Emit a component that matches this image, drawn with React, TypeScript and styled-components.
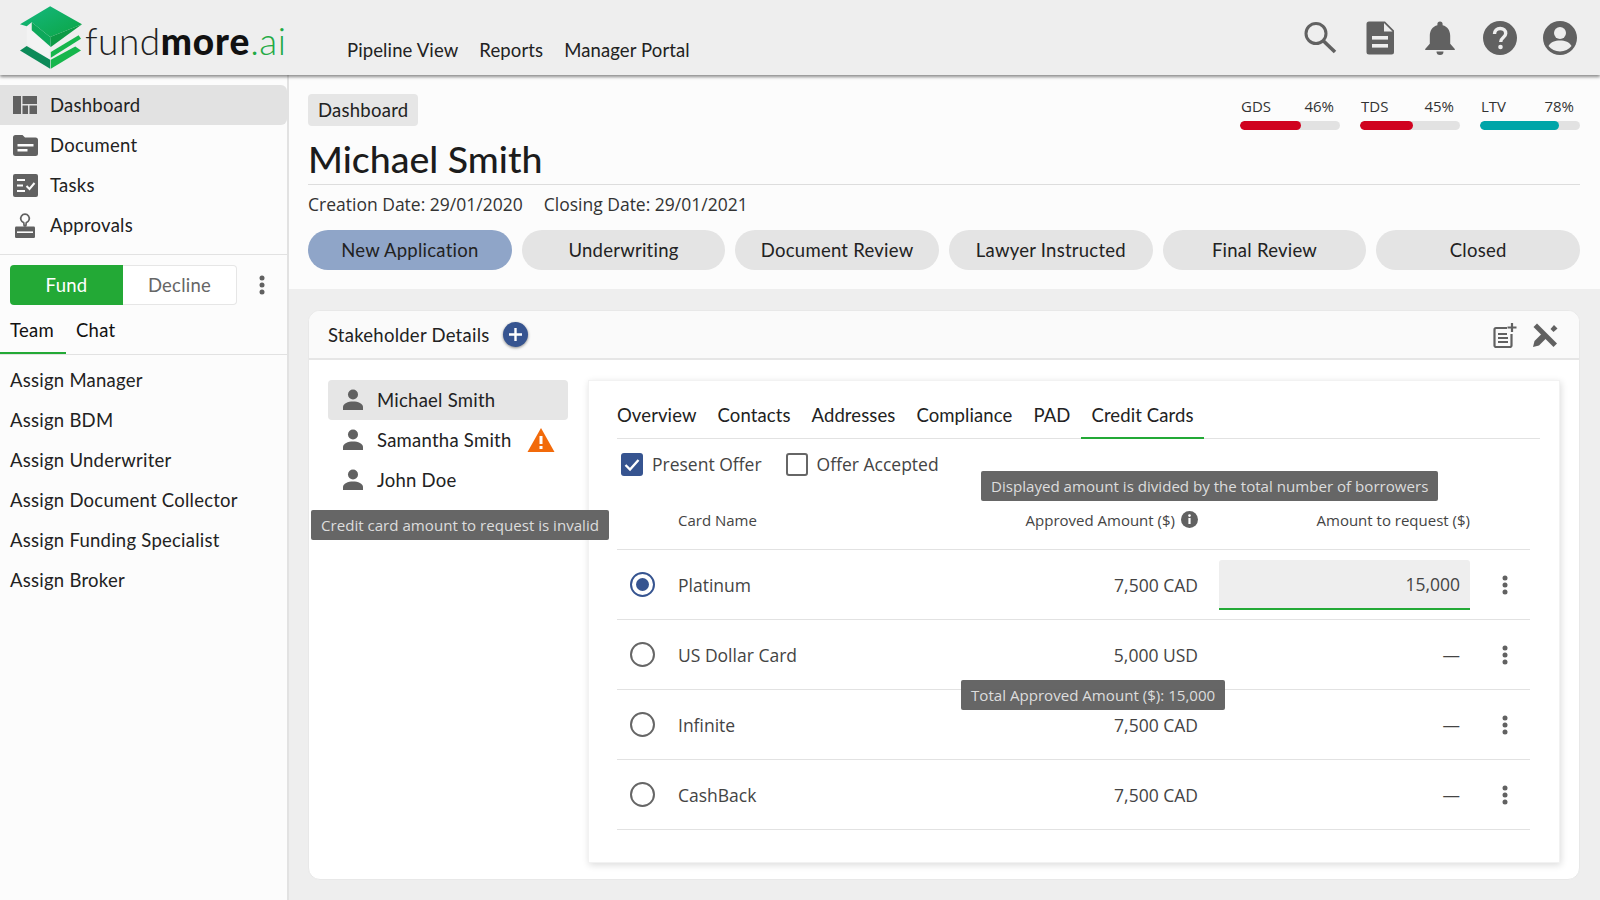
import React from "react";
import styled, { createGlobalStyle } from "styled-components";

const Global = createGlobalStyle`
  html, body { margin: 0; padding: 0; background: #eeeeee; }
  body { font-family: "Open Sans", "Liberation Sans", sans-serif; color: #222; }
  * { box-sizing: border-box; }
`;

const HEAD = `"Lato", "Open Sans", sans-serif`;
const HEADTEXT = `
  font-family: ${HEAD};
  font-size: 18.5px;
  letter-spacing: 0.25px;
  color: #222;
`;

const Page = styled.div`
  position: relative;
  width: 1600px;
  height: 900px;
  overflow: hidden;
  display: flex;
  flex-direction: column;
  background: #eee;
`;
const Header = styled.header`
  height: 75px;
  flex: none;
  background: #eeeeee;
  box-shadow: 0 2px 3px rgba(0, 0, 0, 0.45);
  display: flex;
  align-items: flex-start;
  position: relative;
  z-index: 2;
`;
const Logo = styled.div`
  width: 347px;
  flex: none;
  padding: 6px 0 0 20px;
  display: flex;
  align-items: flex-start;
`;
const LogoText = styled.div`
  font-family: ${HEAD};
  font-size: 37px;
  font-weight: 300;
  color: #222;
  margin: 13px 0 0 3px;
  line-height: 44px;
  letter-spacing: 0.5px;
  white-space: nowrap;
  b { font-weight: 900; color: #111; letter-spacing: 0.9px; }
  i { font-style: normal; color: #22aa44; }
`;
const TopNav = styled.nav`
  ${HEADTEXT}
  letter-spacing: 0.12px;
  display: flex;
  gap: 21px;
  padding-top: 39px;
  line-height: 22px;
`;
const TopIcons = styled.div`
  margin-left: auto;
  display: flex;
  gap: 24px;
  padding: 20px 22px 0 0;
`;
const Body = styled.div`
  flex: 1;
  display: flex;
  min-height: 0;
`;
const Side = styled.aside`
  width: 289px;
  flex: none;
  background: #fcfcfc;
  border-right: 2px solid #e2e2e2;
  padding-top: 10px;
`;
const NavRow = styled.div<{ $active?: boolean }>`
  ${HEADTEXT}
  height: 40px;
  display: flex;
  align-items: center;
  gap: 12px;
  padding-left: 12px;
  border-radius: 0 6px 6px 0;
  background: ${(p) => (p.$active ? "#e2e2e2" : "transparent")};
`;
const NavIcon = styled.span`
  width: 26px;
  height: 25px;
  flex: none;
  display: flex;
  align-items: center;
  justify-content: center;
`;
const SideDivider = styled.div`
  height: 1px;
  background: #e2e2e2;
  margin-top: 9px;
`;
const ActionRow = styled.div`
  display: flex;
  align-items: center;
  padding: 10px 0 0 10px;
`;
const FundBtn = styled.div`
  ${HEADTEXT}
  color: #fff;
  width: 113px;
  height: 40px;
  background: #23a936;
  border-radius: 4px 0 0 4px;
  display: flex;
  align-items: center;
  justify-content: center;
`;
const DeclineBtn = styled.div`
  ${HEADTEXT}
  color: #666;
  width: 114px;
  height: 40px;
  background: #fff;
  border: 1px solid #e6e6e6;
  border-left: none;
  border-radius: 0 4px 4px 0;
  display: flex;
  align-items: center;
  justify-content: center;
`;
const DotsSlot = styled.div`
  display: flex;
  margin-left: 13px;
`;
const SideTabs = styled.div`
  ${HEADTEXT}
  height: 50px;
  display: flex;
  align-items: stretch;
  border-bottom: 1px solid #e2e2e2;
`;
const SideTab = styled.div<{ $active?: boolean; $w: number }>`
  width: ${(p) => p.$w}px;
  padding: 14px 0 0 10px;
  color: #111;
  box-shadow: ${(p) => (p.$active ? "inset 0 -2px 0 #23a936" : "none")};
`;
const AssignList = styled.div`
  padding-top: 5px;
`;
const AssignRow = styled.div`
  ${HEADTEXT}
  height: 40px;
  display: flex;
  align-items: center;
  padding-left: 10px;
`;
const Main = styled.main`
  flex: 1;
  min-width: 0;
  display: flex;
  flex-direction: column;
`;
const Summary = styled.section`
  height: 214px;
  flex: none;
  background: #fcfcfc;
  padding: 19px 20px 0 19px;
`;
const SummaryTop = styled.div`
  display: flex;
  justify-content: space-between;
  align-items: flex-start;
`;
const Crumb = styled.div`
  ${HEADTEXT}
  height: 32px;
  padding: 0 10px;
  background: #e6e6e6;
  border-radius: 4px;
  display: flex;
  align-items: center;
`;
const Gauges = styled.div`
  display: flex;
  gap: 20px;
  margin-top: 2px;
`;
const Gauge = styled.div`
  width: 100px;
  font-size: 15px;
  color: #333;
`;
const GaugeLabels = styled.div`
  display: flex;
  justify-content: space-between;
  padding: 0 6px 0 1px;
  line-height: 20px;
  margin-bottom: 5px;
`;
const Track = styled.div`
  height: 9px;
  border-radius: 5px;
  background: #e2e2e2;
  overflow: hidden;
`;
const Fill = styled.div<{ $c: string }>`
  height: 100%;
  border-radius: 5px;
  background: ${(p) => p.$c};
`;
const Title = styled.h1`
  margin: 7px 0 0;
  height: 48px;
  font-family: ${HEAD};
  font-weight: 500;
  font-size: 37.5px;
  line-height: 44px;
  color: #1c1c1c;
  border-bottom: 1px solid #ddd;
`;
const Dates = styled.div`
  display: flex;
  gap: 21px;
  font-size: 17.5px;
  line-height: 24px;
  margin-top: 7px;
  color: #333;
`;
const Stages = styled.div`
  display: flex;
  gap: 10px;
  margin-top: 14px;
`;
const Stage = styled.div<{ $active?: boolean }>`
  ${HEADTEXT}
  flex: 1;
  height: 40px;
  border-radius: 20px;
  background: ${(p) => (p.$active ? "#8fa5c8" : "#e4e4e4")};
  display: flex;
  align-items: center;
  justify-content: center;
`;
const Workspace = styled.section`
  flex: 1;
  padding: 21px 20px 20px 19px;
  min-height: 0;
`;
const Card = styled.div`
  height: 100%;
  background: #fff;
  border: 1px solid #e8e8e8;
  border-radius: 12px;
  display: flex;
  flex-direction: column;
  overflow: hidden;
`;
const CardHead = styled.div`
  ${HEADTEXT}
  height: 49px;
  flex: none;
  background: #fafafa;
  border-bottom: 2px solid #e6e6e6;
  display: flex;
  align-items: center;
  padding: 0 21px 0 19px;
`;
const AddBtn = styled.div`
  width: 25px;
  height: 25px;
  border-radius: 50%;
  background: #365490;
  box-shadow: 0 1px 3px rgba(0, 0, 0, 0.45);
  margin-left: 13px;
  display: flex;
  align-items: center;
  justify-content: center;
`;
const CardTools = styled.div`
  margin-left: auto;
  display: flex;
  gap: 14px;
  align-items: center;
`;
const CardBody = styled.div`
  flex: 1;
  display: flex;
  min-height: 0;
  padding: 20px 19px 16px 19px;
`;
const People = styled.div`
  width: 240px;
  flex: none;
`;
const Person = styled.div<{ $active?: boolean }>`
  ${HEADTEXT}
  height: 40px;
  display: flex;
  align-items: center;
  gap: 13px;
  padding-left: 14px;
  border-radius: 4px;
  background: ${(p) => (p.$active ? "#e6e6e6" : "transparent")};
`;
const Panel = styled.div`
  flex: 1;
  margin-left: 20px;
  background: #fff;
  border: 1px solid #f2f2f2;
  box-shadow: 1px 2px 7px rgba(0, 0, 0, 0.14);
  padding: 0 19px 0 28px;
`;
const PanelTabs = styled.div`
  ${HEADTEXT}
  letter-spacing: 0.1px;
  height: 58px;
  display: flex;
  border-bottom: 1px solid #e2e2e2;
`;
const PanelTab = styled.div<{ $active?: boolean }>`
  padding: 23px 10.5px 0;
  margin-bottom: -1px;
  &:first-child { padding-left: 0; }
  box-shadow: ${(p) => (p.$active ? "inset 0 -2px 0 #23a936" : "none")};
`;
const Offers = styled.div`
  display: flex;
  gap: 24px;
  padding: 14px 0 0 4px;
  height: 67px;
`;
const Check = styled.label`
  display: flex;
  gap: 9px;
  align-items: flex-start;
  font-size: 17.5px;
  line-height: 23px;
  color: #444;
`;
const Box = styled.span<{ $on?: boolean }>`
  width: 22px;
  height: 23px;
  border-radius: 3px;
  background: ${(p) => (p.$on ? "#365490" : "#fff")};
  border: ${(p) => (p.$on ? "none" : "2px solid #666")};
  display: flex;
  align-items: center;
  justify-content: center;
`;
const GRID = "61px 1fr 200px 272px 60px";
const TableHead = styled.div`
  display: grid;
  grid-template-columns: ${GRID};
  height: 44px;
  width: 913px;
  border-bottom: 1px solid #e2e2e2;
  font-size: 15px;
  color: #444;
  line-height: 20px;
  padding-top: 4px;
`;
const HeadRight = styled.div`
  display: flex;
  justify-content: flex-end;
  gap: 6px;
  white-space: nowrap;
`;
const HeadAmount = styled.div`
  text-align: right;
`;
const Row = styled.div`
  display: grid;
  grid-template-columns: ${GRID};
  height: 70px;
  width: 913px;
  border-bottom: 1px solid #e2e2e2;
  align-items: center;
  font-size: 17.5px;
  color: #444;
`;
const Radio = styled.span<{ $on?: boolean }>`
  width: 25px;
  height: 25px;
  margin-left: 13px;
  border-radius: 50%;
  border: 2px solid ${(p) => (p.$on ? "#365490" : "#666")};
  display: flex;
  align-items: center;
  justify-content: center;
  &::after {
    content: "";
    width: 13px;
    height: 13px;
    border-radius: 50%;
    background: ${(p) => (p.$on ? "#365490" : "transparent")};
  }
`;
const Amount = styled.div`
  text-align: right;
`;
const Input = styled.div`
  margin-left: 21px;
  height: 50px;
  background: #eeeeee;
  border-bottom: 2px solid #23a936;
  border-radius: 3px 3px 0 0;
  display: flex;
  align-items: center;
  justify-content: flex-end;
  padding-right: 10px;
`;
const Empty = styled.div`
  text-align: right;
  padding-right: 10px;
`;
const RowDots = styled.div`
  display: flex;
  justify-content: center;
  padding-left: 10px;
`;
const Tooltip = styled.div<{ $x: number; $y: number }>`
  position: absolute;
  left: ${(p) => p.$x}px;
  top: ${(p) => p.$y}px;
  height: 30px;
  padding: 0 10px;
  border-radius: 2px;
  display: flex;
  align-items: center;
  background: rgba(92, 92, 92, 0.94);
  color: #ddd;
  font-size: 15.1px;
  white-space: nowrap;
  z-index: 3;
`;

const G = "#616161";

const LogoMark = () => (
  <svg width="62" height="63" viewBox="30 18 185 187">
    <defs>
      <linearGradient id="lg" x1="0" y1="0" x2="1" y2="1">
        <stop offset="0" stopColor="#15b880" />
        <stop offset="1" stopColor="#0ba544" />
      </linearGradient>
    </defs>
    <path d="M50 75 L118 135 L118 178 L50 130Z" fill="#f3f3f3" />
    <path d="M30 72 L120 18 L215 72 L120 110 L65 66 L50 78Z" fill="url(#lg)" />
    <path d="M120 110 L215 72 L122 140Z" fill="#0c9a45" />
    <path d="M65 66 L120 110 L122 140 L65 90Z" fill="#0da85a" />
    <path d="M122 155 L205 105 L212 115 L122 172Z" fill="#16b64c" />
    <path d="M122 178 L195 138 L212 150 L122 205Z" fill="#16b64c" />
    <path d="M30 150 L50 137 L120 178 L120 205Z" fill="#0c8a58" />
  </svg>
);
const SearchIcon = () => (
  <svg width="36" height="36" viewBox="0 0 36 36" fill="none" stroke={G}>
    <circle cx="14" cy="13.5" r="10" strokeWidth="3" />
    <path d="M21.5 21 L33 32" strokeWidth="3.6" />
  </svg>
);
const DocIcon = () => (
  <svg width="36" height="36" viewBox="0 0 36 36">
    <path d="M7 1.500H23L32 10.500V32a2.500 2.500 0 0 1-2.500 2.500H7A2.500 2.500 0 0 1 4.500 32V4A2.500 2.500 0 0 1 7 1.500Z" fill={G} />
    <path d="M22 3 L30.500 11.500 H22Z" fill="#eee" />
    <rect x="10" y="16" width="16" height="3.600" fill="#eee" />
    <rect x="10" y="24" width="16" height="3.600" fill="#eee" />
  </svg>
);
const BellIcon = () => (
  <svg width="36" height="36" viewBox="0 0 36 36" fill={G}>
    <path d="M18 1.5a2.6 2.6 0 0 1 2.6 2.6v1.1c5 1.2 7.6 5.6 7.6 10.6v8l4.6 5.2v1H3.2v-1l4.6-5.2v-8c0-5 2.6-9.400 7.600-10.600v-1.100A2.600 2.600 0 0 1 18 1.500z" />
    <path d="M14.500 31.500h7a3.500 3.500 0 0 1-7 0z" />
  </svg>
);
const HelpIcon = () => (
  <svg width="36" height="36" viewBox="0 0 36 36">
    <circle cx="18" cy="18" r="17" fill={G} />
    <path d="M12.500 14c0-3.300 2.400-5.500 5.700-5.500s5.500 2 5.500 4.900c0 4.100-5 4.100-5 8.500" fill="none" stroke="#eee" strokeWidth="3.400" />
    <circle cx="18.500" cy="27" r="2.300" fill="#eee" />
  </svg>
);
const UserIcon = () => (
  <svg width="36" height="36" viewBox="0 0 36 36">
    <circle cx="18" cy="18" r="17" fill={G} />
    <circle cx="18" cy="13" r="6" fill="#eee" />
    <path d="M6.500 26c2-4 6.500-5.600 11.500-5.600s9.500 1.600 11.500 5.600c-2.700 3.300-6.800 5.400-11.500 5.400S9.200 29.300 6.500 26z" fill="#eee" />
  </svg>
);
const DashIcon = () => (
  <svg width="24" height="18" viewBox="0 0 24 18" fill={G}>
    <path d="M0 0h8v18H0zM9.500 0H24v8H9.500zM9.500 9.500H15V18H9.500zM16.500 9.500H24V18h-7.500z" />
  </svg>
);
const FolderIcon = () => (
  <svg width="25" height="21" viewBox="0 0 25 21" fill={G}>
    <path d="M2.500 0h7l2.500 2.500h10.500a2.500 2.500 0 0 1 2.500 2.500v13.500a2.500 2.500 0 0 1-2.500 2.500h-20A2.500 2.500 0 0 1 0 18.500v-16A2.500 2.500 0 0 1 2.500 0z" />
    <path d="M4.500 9h16v2.500h-16zM4.500 14h10v2.500h-10z" fill="#fcfcfc" />
  </svg>
);
const TasksIcon = () => (
  <svg width="25" height="23" viewBox="0 0 25 23" fill={G}>
    <rect x="0" y="0" width="25" height="23" rx="2" />
    <path d="M4 5h8v2H4zM4 10.500h6v2H4zM4 16h8v2H4z" fill="#fcfcfc" />
    <path d="M13.500 12l3 3 5-6" fill="none" stroke="#fcfcfc" strokeWidth="2" />
  </svg>
);
const StampIcon = () => (
  <svg width="22" height="25" viewBox="0 0 22 25">
    <path d="M9.700 9.600A4.300 4.300 0 1 1 12.300 9.600L11.800 13H10.200Z" fill="none" stroke={G} strokeWidth="1.700" strokeLinejoin="round" />
    <rect x="1" y="13.500" width="20" height="11.500" rx="1.200" fill={G} />
    <path d="M3 18.400h16v1.600H3z" fill="#fcfcfc" />
  </svg>
);
const PersonIcon = () => (
  <svg width="22" height="22" viewBox="0 0 22 22" fill={G}>
    <circle cx="11" cy="5.500" r="5" />
    <path d="M1 21v-3c0-3.500 5-5.500 10-5.500S21 14.500 21 18v3z" />
  </svg>
);
const WarnIcon = () => (
  <svg width="28" height="24" viewBox="0 0 28 24" style={{ marginLeft: 2 }}>
    <path d="M14 0 L27.500 24 H0.500Z" fill="#f26a0a" />
    <rect x="12.500" y="8" width="3" height="8" fill="#fff" />
    <rect x="12.500" y="18" width="3" height="3" fill="#fff" />
  </svg>
);
const NoteAddIcon = () => (
  <svg width="26" height="26" viewBox="0 0 26 26" fill="none" stroke={G} strokeWidth="2.200">
    <path d="M15 6H4a1.500 1.500 0 0 0-1.500 1.500v16A1.500 1.500 0 0 0 4 25h14a1.500 1.500 0 0 0 1.500-1.500V12" />
    <path d="M6 12h9M6 16h10M6 20h10" />
    <path d="M20 1v9M15.500 5.500h9" />
  </svg>
);
const ToolsIcon = () => (
  <svg width="26" height="26" viewBox="0 0 26 26" fill={G}>
    <path d="M1.500 5 L5 1.500 L25 21.500 L21.500 25Z" />
    <path d="M1 25 L2.500 19 L11 10.500 L15.500 15 L7 23.500Z" />
    <path d="M18.500 7 L22 3 L25.500 6.500 L21.500 10Z" />
  </svg>
);
const InfoIcon = () => (
  <svg width="17" height="17" viewBox="0 0 17 17" style={{ marginTop: 1 }}>
    <circle cx="8.500" cy="8.500" r="8.500" fill={G} />
    <rect x="7.400" y="7" width="2.200" height="6" fill="#fff" />
    <circle cx="8.500" cy="4.600" r="1.300" fill="#fff" />
  </svg>
);
const Kebab = () => (
  <svg width="24" height="24" viewBox="0 0 24 24" fill={G}>
    <circle cx="12" cy="5" r="2.500" />
    <circle cx="12" cy="12" r="2.500" />
    <circle cx="12" cy="19" r="2.500" />
  </svg>
);

const nav: [string, React.ReactNode][] = [
  ["Dashboard", <DashIcon />],
  ["Document", <FolderIcon />],
  ["Tasks", <TasksIcon />],
  ["Approvals", <StampIcon />],
];
const assign = ["Assign Manager", "Assign BDM", "Assign Underwriter", "Assign Document Collector", "Assign Funding Specialist", "Assign Broker"];
const stages = ["New Application", "Underwriting", "Document Review", "Lawyer Instructed", "Final Review", "Closed"];
const tabs = ["Overview", "Contacts", "Addresses", "Compliance", "PAD", "Credit Cards"];
const gauges = [
  { n: "GDS", v: 46, w: 61, c: "#d0021f" },
  { n: "TDS", v: 45, w: 53, c: "#d0021f" },
  { n: "LTV", v: 78, w: 79, c: "#00a5a8" },
];
const rows = [
  { n: "Platinum", a: "7,500 CAD", on: true },
  { n: "US Dollar Card", a: "5,000 USD" },
  { n: "Infinite", a: "7,500 CAD" },
  { n: "CashBack", a: "7,500 CAD" },
];

export default function App() {
  return (
    <Page>
      <Global />
      <Header>
        <Logo>
          <LogoMark />
          <LogoText>
            fund<b>more</b>
            <i>.ai</i>
          </LogoText>
        </Logo>
        <TopNav>
          <span>Pipeline View</span>
          <span>Reports</span>
          <span>Manager Portal</span>
        </TopNav>
        <TopIcons>
          <SearchIcon />
          <DocIcon />
          <BellIcon />
          <HelpIcon />
          <UserIcon />
        </TopIcons>
      </Header>
      <Body>
        <Side>
          {nav.map(([n, i], k) => (
            <NavRow key={n} $active={k === 0}>
              <NavIcon>{i}</NavIcon>
              {n}
            </NavRow>
          ))}
          <SideDivider />
          <ActionRow>
            <FundBtn>Fund</FundBtn>
            <DeclineBtn>Decline</DeclineBtn>
            <DotsSlot>
              <Kebab />
            </DotsSlot>
          </ActionRow>
          <SideTabs>
            <SideTab $active $w={66}>Team</SideTab>
            <SideTab $w={80}>Chat</SideTab>
          </SideTabs>
          <AssignList>
            {assign.map((a) => (
              <AssignRow key={a}>{a}</AssignRow>
            ))}
          </AssignList>
        </Side>
        <Main>
          <Summary>
            <SummaryTop>
              <Crumb>Dashboard</Crumb>
              <Gauges>
                {gauges.map((g) => (
                  <Gauge key={g.n}>
                    <GaugeLabels>
                      <span>{g.n}</span>
                      <span>{g.v}%</span>
                    </GaugeLabels>
                    <Track>
                      <Fill $c={g.c} style={{ width: `${g.w}%` }} />
                    </Track>
                  </Gauge>
                ))}
              </Gauges>
            </SummaryTop>
            <Title>Michael Smith</Title>
            <Dates>
              <span>Creation Date: 29/01/2020</span>
              <span>Closing Date: 29/01/2021</span>
            </Dates>
            <Stages>
              {stages.map((s, i) => (
                <Stage key={s} $active={i === 0}>
                  {s}
                </Stage>
              ))}
            </Stages>
          </Summary>
          <Workspace>
            <Card>
              <CardHead>
                Stakeholder Details
                <AddBtn>
                  <svg width="15" height="15" viewBox="0 0 15 15">
                    <path d="M6.300 1h2.400v5.300H14v2.400H8.700V14H6.300V8.700H1V6.300h5.300z" fill="#fff" />
                  </svg>
                </AddBtn>
                <CardTools>
                  <NoteAddIcon />
                  <ToolsIcon />
                </CardTools>
              </CardHead>
              <CardBody>
                <People>
                  <Person $active>
                    <PersonIcon />
                    Michael Smith
                  </Person>
                  <Person>
                    <PersonIcon />
                    Samantha Smith
                    <WarnIcon />
                  </Person>
                  <Person>
                    <PersonIcon />
                    John Doe
                  </Person>
                </People>
                <Panel>
                  <PanelTabs>
                    {tabs.map((t, i) => (
                      <PanelTab key={t} $active={i === 5}>
                        {t}
                      </PanelTab>
                    ))}
                  </PanelTabs>
                  <Offers>
                    <Check>
                      <Box $on>
                        <svg width="16" height="14" viewBox="0 0 16 14">
                          <path d="M1.500 7l4.500 4.500L14.500 2" fill="none" stroke="#fff" strokeWidth="2.400" />
                        </svg>
                      </Box>
                      Present Offer
                    </Check>
                    <Check>
                      <Box />
                      Offer Accepted
                    </Check>
                  </Offers>
                  <TableHead>
                    <span />
                    <span>Card Name</span>
                    <HeadRight>
                      Approved Amount ($) <InfoIcon />
                    </HeadRight>
                    <HeadAmount>Amount to request ($)</HeadAmount>
                    <span />
                  </TableHead>
                  {rows.map((r) => (
                    <Row key={r.n}>
                      <Radio $on={r.on} />
                      <div>{r.n}</div>
                      <Amount>{r.a}</Amount>
                      {r.on ? <Input>15,000</Input> : <Empty>—</Empty>}
                      <RowDots>
                        <Kebab />
                      </RowDots>
                    </Row>
                  ))}
                </Panel>
              </CardBody>
            </Card>
          </Workspace>
        </Main>
      </Body>
      <Tooltip $x={311} $y={510}>Credit card amount to request is invalid</Tooltip>
      <Tooltip $x={981} $y={471}>Displayed amount is divided by the total number of borrowers</Tooltip>
      <Tooltip $x={961} $y={680}>Total Approved Amount ($): 15,000</Tooltip>
    </Page>
  );
}
